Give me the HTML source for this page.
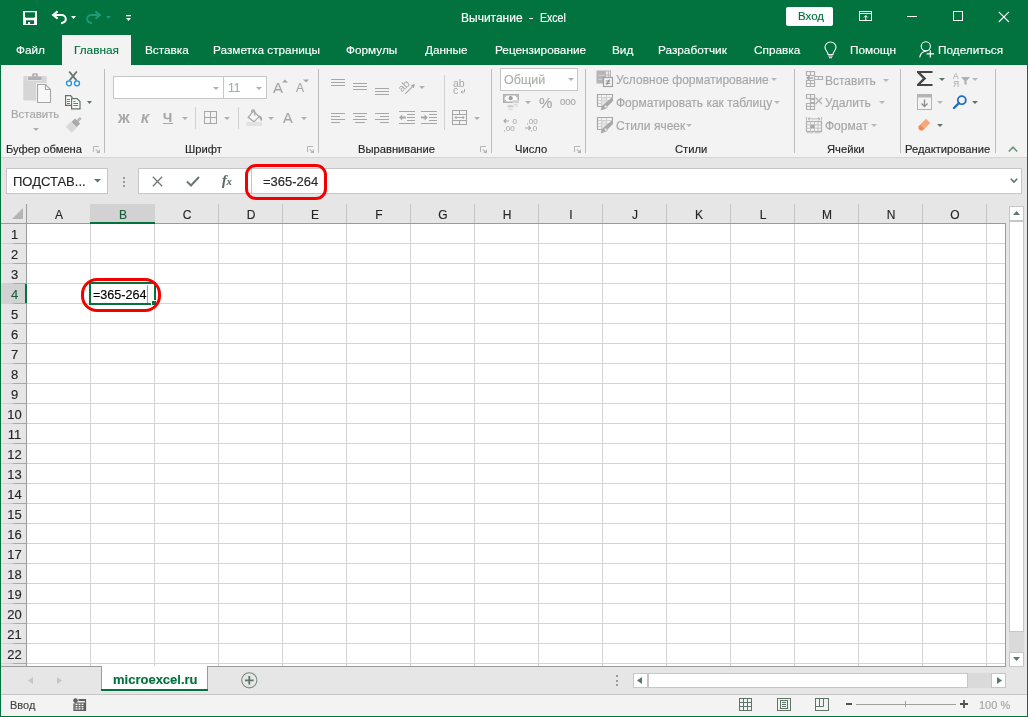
<!DOCTYPE html><html><head><meta charset="utf-8"><style>
*{margin:0;padding:0;box-sizing:border-box}
html,body{width:1028px;height:717px;overflow:hidden;background:#fff;font-family:"Liberation Sans",sans-serif}
.a{position:absolute}
.t{position:absolute;white-space:nowrap;line-height:1;will-change:transform;-webkit-text-stroke:0.15px currentColor}
svg{position:absolute;overflow:visible}
</style></head><body><div class="a" style="left:0px;top:0px;width:1028px;height:65px;background:#02723f"></div><svg style="left:23px;top:11px;" width="14" height="14" viewBox="0 0 14 14"><rect x="0" y="0" width="14" height="14" fill="#fff"/><path d="M2 1.2H12V6L11 6.8H3L2 6Z" fill="#02723f"/><path d="M3 9.2H11V13H7V11H5V13H3Z" fill="#02723f"/></svg><svg style="left:48px;top:8px;" width="22" height="18" viewBox="0 0 22 18"><path d="M5 7H13.5C16 7 17.8 8.8 17.8 11.1C17.8 13.3 16.3 14.8 13 15.2" fill="none" stroke="#fff" stroke-width="2"/><path d="M9.6 3.4L5.2 7L9.6 10.6" fill="none" stroke="#fff" stroke-width="2.1"/></svg><svg style="left:71px;top:16px;" width="5" height="3" viewBox="0 0 5 3"><path d="M0 0H5L2.5 3Z" fill="#fff"/></svg><svg style="left:84px;top:8px;" width="22" height="18" viewBox="0 0 22 18"><path d="M16 7H7.5C5 7 3.2 8.8 3.2 11.1C3.2 13.3 4.7 14.8 8 15.2" fill="none" stroke="#1e9a72" stroke-width="2"/><path d="M11.4 3.4L15.8 7L11.4 10.6" fill="none" stroke="#1e9a72" stroke-width="2.1"/></svg><svg style="left:106px;top:16px;" width="5" height="3" viewBox="0 0 5 3"><path d="M0 0H5L2.5 3Z" fill="#1e9a72"/></svg><svg style="left:126px;top:14px;" width="5" height="8" viewBox="0 0 5 8"><rect x="0" y="1" width="5" height="1.3" fill="#fff"/><path d="M0 4H5L2.5 7Z" fill="#fff"/></svg><div class="t" style="left:461px;top:11.84px;font-size:12px;color:#fff;font-weight:400;">Вычитание</div><div class="a" style="left:529px;top:18px;width:4px;height:1px;background:#fff"></div><div class="t" style="left:539.5px;top:11.84px;font-size:12px;color:#fff;font-weight:400;"><span style="display:inline-block;transform:scaleX(0.88);transform-origin:0 0">Excel</span></div><div class="a" style="left:786px;top:7px;width:47px;height:19px;background:#fff;border-radius:2px"></div><div class="t" style="left:797.5px;top:11.47px;font-size:11.5px;color:#02723f;font-weight:400;">Вход</div><svg style="left:859px;top:11px;" width="14" height="11" viewBox="0 0 14 11"><rect x="0.5" y="0.5" width="12" height="9" fill="none" stroke="#fff" stroke-width="1"/><path d="M0.5 2.5H12.5" stroke="#fff" stroke-width="1"/><path d="M6.8 9.5V4.6M5 6.4L6.8 4.6L8.6 6.4" fill="none" stroke="#fff" stroke-width="1"/></svg><div class="a" style="left:907px;top:16px;width:10px;height:1px;background:#fff"></div><svg style="left:953px;top:11px;" width="11" height="11" viewBox="0 0 11 11"><rect x="0.5" y="0.5" width="9" height="9" fill="none" stroke="#fff" stroke-width="1"/></svg><svg style="left:998px;top:11px;" width="12" height="12" viewBox="0 0 12 12"><path d="M0.8 0.8L11 11M11 0.8L0.8 11" stroke="#fff" stroke-width="1.1"/></svg><div class="a" style="left:62px;top:35px;width:69px;height:30px;background:#f3f3f3"></div><div class="t" style="left:16px;top:44.91px;font-size:11.8px;color:#fff;font-weight:400;">Файл</div><div class="t" style="left:74px;top:44.91px;font-size:11.8px;color:#02723f;font-weight:400;">Главная</div><div class="t" style="left:145px;top:44.91px;font-size:11.8px;color:#fff;font-weight:400;">Вставка</div><div class="t" style="left:213px;top:44.91px;font-size:11.8px;color:#fff;font-weight:400;">Разметка страницы</div><div class="t" style="left:346px;top:44.91px;font-size:11.8px;color:#fff;font-weight:400;">Формулы</div><div class="t" style="left:425px;top:44.91px;font-size:11.8px;color:#fff;font-weight:400;">Данные</div><div class="t" style="left:495px;top:44.91px;font-size:11.8px;color:#fff;font-weight:400;">Рецензирование</div><div class="t" style="left:612px;top:44.91px;font-size:11.8px;color:#fff;font-weight:400;">Вид</div><div class="t" style="left:658px;top:44.91px;font-size:11.8px;color:#fff;font-weight:400;">Разработчик</div><div class="t" style="left:754px;top:44.91px;font-size:11.8px;color:#fff;font-weight:400;">Справка</div><div class="t" style="left:850px;top:44.91px;font-size:11.8px;color:#fff;font-weight:400;">Помощн</div><div class="t" style="left:938px;top:44.91px;font-size:11.8px;color:#fff;font-weight:400;">Поделиться</div><svg style="left:824px;top:41px;" width="13" height="18" viewBox="0 0 13 18"><path d="M6.5 1C3.3 1 1 3.4 1 6.3C1 8.5 2.3 9.8 3.3 11.2C3.9 12 4 12.7 4 13.5H9C9 12.7 9.1 12 9.7 11.2C10.7 9.8 12 8.5 12 6.3C12 3.4 9.7 1 6.5 1Z" fill="none" stroke="#fff" stroke-width="1.1"/><path d="M4.2 15H8.8M5 16.8H8" stroke="#fff" stroke-width="1.1"/></svg><svg style="left:919px;top:41px;" width="16" height="17" viewBox="0 0 16 17"><circle cx="6.8" cy="5.3" r="4.6" fill="none" stroke="#fff" stroke-width="1.1"/><path d="M0.7 16.5C1.3 12.8 3.6 10.4 7.2 10.2" fill="none" stroke="#fff" stroke-width="1.1"/><path d="M11.3 9.2V16.6M7.6 12.9H15" stroke="#fff" stroke-width="1.2"/></svg><div class="a" style="left:1px;top:65px;width:1026px;height:92px;background:#f3f3f3"></div><div class="a" style="left:1px;top:157px;width:1026px;height:1px;background:#d5d5d5"></div><div class="a" style="left:104px;top:69px;width:1px;height:84px;background:#bdbdbd"></div><div class="a" style="left:318px;top:69px;width:1px;height:84px;background:#bdbdbd"></div><div class="a" style="left:491px;top:69px;width:1px;height:84px;background:#bdbdbd"></div><div class="a" style="left:585px;top:69px;width:1px;height:84px;background:#bdbdbd"></div><div class="a" style="left:794px;top:69px;width:1px;height:84px;background:#bdbdbd"></div><div class="a" style="left:900px;top:69px;width:1px;height:84px;background:#bdbdbd"></div><div class="a" style="left:995px;top:69px;width:1px;height:84px;background:#bdbdbd"></div><div class="t" style="left:6px;top:143.52px;font-size:11.2px;color:#262626;font-weight:400;">Буфер обмена</div><div class="t" style="left:185px;top:143.52px;font-size:11.2px;color:#262626;font-weight:400;">Шрифт</div><div class="t" style="left:358px;top:143.52px;font-size:11.2px;color:#262626;font-weight:400;">Выравнивание</div><div class="t" style="left:515px;top:143.52px;font-size:11.2px;color:#262626;font-weight:400;">Число</div><div class="t" style="left:675px;top:143.52px;font-size:11.2px;color:#262626;font-weight:400;">Стили</div><div class="t" style="left:827px;top:143.52px;font-size:11.2px;color:#262626;font-weight:400;">Ячейки</div><div class="t" style="left:905px;top:143.52px;font-size:11.2px;color:#262626;font-weight:400;">Редактирование</div><svg style="left:93px;top:146px;" width="8" height="8" viewBox="0 0 8 8"><path d="M0.5 6V0.5H6" fill="none" stroke="#b5b5b5" stroke-width="1"/><path d="M2.8 3.4L5.5 6.1" stroke="#b5b5b5" stroke-width="1.1"/><path d="M3.2 7H7V3.2Z" fill="#b5b5b5"/></svg><svg style="left:307px;top:146px;" width="8" height="8" viewBox="0 0 8 8"><path d="M0.5 6V0.5H6" fill="none" stroke="#b5b5b5" stroke-width="1"/><path d="M2.8 3.4L5.5 6.1" stroke="#b5b5b5" stroke-width="1.1"/><path d="M3.2 7H7V3.2Z" fill="#b5b5b5"/></svg><svg style="left:480px;top:146px;" width="8" height="8" viewBox="0 0 8 8"><path d="M0.5 6V0.5H6" fill="none" stroke="#b5b5b5" stroke-width="1"/><path d="M2.8 3.4L5.5 6.1" stroke="#b5b5b5" stroke-width="1.1"/><path d="M3.2 7H7V3.2Z" fill="#b5b5b5"/></svg><svg style="left:574px;top:146px;" width="8" height="8" viewBox="0 0 8 8"><path d="M0.5 6V0.5H6" fill="none" stroke="#b5b5b5" stroke-width="1"/><path d="M2.8 3.4L5.5 6.1" stroke="#b5b5b5" stroke-width="1.1"/><path d="M3.2 7H7V3.2Z" fill="#b5b5b5"/></svg><svg style="left:1008px;top:146px;" width="10" height="6" viewBox="0 0 10 6"><path d="M0.8 5.5L5 1.2L9.2 5.5" fill="none" stroke="#6f8f7a" stroke-width="1.6"/></svg><svg style="left:23px;top:73px;" width="29" height="31" viewBox="0 0 29 31"><rect x="0.3" y="3" width="23.4" height="24.6" rx="1" fill="#d6d6d6"/><rect x="4.5" y="2.5" width="14.5" height="5" fill="#f3f3f3"/><rect x="5" y="3.4" width="13.7" height="3.6" fill="#b0b0b0"/><rect x="9.2" y="0.3" width="5.6" height="3.5" rx="1.2" fill="#b0b0b0"/><circle cx="12" cy="2.3" r="0.9" fill="#f3f3f3"/><path d="M13 10H23L29 16V31H13Z" fill="#f3f3f3"/><path d="M14.5 11.5H22.5L27.5 16.5V29.5H14.5Z" fill="#f8f8f8" stroke="#a6a6a6" stroke-width="1.1"/><path d="M22.5 11.5V16.5H27.5" fill="none" stroke="#a6a6a6" stroke-width="1.1"/></svg><div class="t" style="left:11px;top:108.85px;font-size:11.4px;color:#a6a6a6;font-weight:400;">Вставить</div><svg style="left:33.0px;top:127.5px;" width="6" height="4.0" viewBox="0 0 6 4.0"><path d="M0 0H6L3.0 3.0Z" fill="#b0b0b0"/></svg><svg style="left:65px;top:70px;" width="16" height="18" viewBox="0 0 16 18"><path d="M4.5 10.5L11.8 1.5M11.5 10.5L4.2 1.5" stroke="#66756b" stroke-width="1.9"/><circle cx="4" cy="13.3" r="2.5" fill="#f3f3f3" stroke="#1e8fe0" stroke-width="1.3"/><circle cx="12" cy="13.3" r="2.5" fill="#f3f3f3" stroke="#1e8fe0" stroke-width="1.3"/></svg><svg style="left:65px;top:95px;" width="16" height="15" viewBox="0 0 16 15"><path d="M0.6 0.6H5.5L7 2.1V10.3H0.6Z" fill="#fff" stroke="#5f7266" stroke-width="1.2"/><path d="M6.6 3.6H12L15 6.6V13.8H6.6Z" fill="#fff" stroke="#5f7266" stroke-width="1.2"/><path d="M2 4.5H5M2 6.5H5M2 8.5H5M8.3 6.5H10.5M8.3 8.5H13M8.3 10.5H13" stroke="#1e8fe0" stroke-width="1"/></svg><svg style="left:87px;top:101px;" width="5" height="3" viewBox="0 0 5 3"><path d="M0 0H5L2.5 3Z" fill="#5f7266"/></svg><svg style="left:65px;top:117px;" width="17" height="16" viewBox="0 0 17 16"><g transform="translate(8.3 8.3) rotate(45)"><rect x="-1.4" y="-10.5" width="2.8" height="4.5" fill="#b8b8b8"/><rect x="-3.6" y="-6" width="7.2" height="5" fill="#a9a9a9"/><rect x="-4.2" y="-1" width="8.4" height="7.5" fill="#d9d9d9"/></g></svg><div class="a" style="left:113px;top:76px;width:111px;height:23px;background:#fff;border:1px solid #c6c6c6"></div><div class="a" style="left:223px;top:76px;width:44px;height:23px;background:#fff;border:1px solid #c6c6c6"></div><svg style="left:213.0px;top:86.5px;" width="6" height="4.0" viewBox="0 0 6 4.0"><path d="M0 0H6L3.0 3.0Z" fill="#b0b0b0"/></svg><svg style="left:256.0px;top:86.5px;" width="6" height="4.0" viewBox="0 0 6 4.0"><path d="M0 0H6L3.0 3.0Z" fill="#b0b0b0"/></svg><div class="t" style="left:227.5px;top:82.34px;font-size:12px;color:#9fb0a6;font-weight:400;">11</div><div class="t" style="left:273px;top:79.80px;font-size:15px;color:#a6a6a6;font-weight:400;">A</div><svg style="left:282px;top:79px;" width="6" height="4" viewBox="0 0 6 4"><path d="M0 3.5L3 0.5L6 3.5Z" fill="#a6a6a6"/></svg><div class="t" style="left:296px;top:82.34px;font-size:12px;color:#a6a6a6;font-weight:400;">A</div><svg style="left:303px;top:79px;" width="6" height="4" viewBox="0 0 6 4"><path d="M0 0.5H6L3 3.5Z" fill="#a6a6a6"/></svg><div class="t" style="left:118px;top:112.00px;font-size:13px;color:#a6a6a6;font-weight:700;">Ж</div><div class="t" style="left:141px;top:112.00px;font-size:13px;color:#a6a6a6;font-weight:700;font-style:italic">К</div><div class="t" style="left:163px;top:111.00px;font-size:13px;color:#a6a6a6;font-weight:700;">Ч</div><div class="a" style="left:163px;top:123px;width:10px;height:1.3px;background:#a6a6a6"></div><svg style="left:181.5px;top:116.5px;" width="6" height="4.0" viewBox="0 0 6 4.0"><path d="M0 0H6L3.0 3.0Z" fill="#b0b0b0"/></svg><div class="a" style="left:195px;top:107px;width:1px;height:22px;background:#d0d0d0"></div><svg style="left:204px;top:111px;" width="13" height="13" viewBox="0 0 13 13"><rect x="0.5" y="0.5" width="12" height="12" fill="none" stroke="#a6a6a6" stroke-width="1"/><path d="M6.5 0.5V12.5M0.5 6.5H12.5" stroke="#a6a6a6" stroke-width="1"/></svg><svg style="left:224.0px;top:116.5px;" width="6" height="4.0" viewBox="0 0 6 4.0"><path d="M0 0H6L3.0 3.0Z" fill="#b0b0b0"/></svg><div class="a" style="left:238px;top:107px;width:1px;height:22px;background:#d0d0d0"></div><svg style="left:246px;top:105px;" width="17" height="21" viewBox="0 0 17 21"><path d="M2.2 12.3L7.2 6.2L13.2 11.6L8 16.8Z" fill="#f6f6f6" stroke="#a6a6a6" stroke-width="1.2"/><path d="M5.6 7.6V6C5.6 5.3 6.1 4.9 6.8 4.9H7.6C8.3 4.9 8.7 5.3 8.7 6V10.8" fill="none" stroke="#a6a6a6" stroke-width="1.1"/><path d="M12.4 10.4C14.6 10.6 16.2 12 16.2 13.8C16.2 14.9 15.7 15.6 15 16.2L13.4 12.4Z" fill="#a6a6a6"/><rect x="0" y="17" width="16" height="4" fill="#e2e2e2"/></svg><svg style="left:267.5px;top:116.5px;" width="6" height="4.0" viewBox="0 0 6 4.0"><path d="M0 0H6L3.0 3.0Z" fill="#b0b0b0"/></svg><div class="t" style="left:283px;top:110.53px;font-size:14.5px;color:#a6a6a6;font-weight:400;">A</div><svg style="left:301.0px;top:116.5px;" width="6" height="4.0" viewBox="0 0 6 4.0"><path d="M0 0H6L3.0 3.0Z" fill="#b0b0b0"/></svg><svg style="left:331px;top:79px;" width="20" height="20" viewBox="0 0 20 20"><rect x="0" y="0" width="14" height="1" fill="#a6a6a6"/><rect x="0" y="3" width="14" height="1" fill="#a6a6a6"/><rect x="0" y="6" width="14" height="1" fill="#a6a6a6"/></svg><svg style="left:353px;top:83px;" width="20" height="20" viewBox="0 0 20 20"><rect x="0" y="0" width="14" height="1" fill="#a6a6a6"/><rect x="0" y="3" width="14" height="1" fill="#a6a6a6"/><rect x="0" y="6" width="14" height="1" fill="#a6a6a6"/></svg><svg style="left:375px;top:88px;" width="20" height="20" viewBox="0 0 20 20"><rect x="0" y="0" width="14" height="1" fill="#a6a6a6"/><rect x="0" y="3" width="14" height="1" fill="#a6a6a6"/><rect x="0" y="6" width="14" height="1" fill="#a6a6a6"/></svg><svg style="left:398px;top:79px;" width="20" height="16" viewBox="0 0 20 16"><text x="0" y="0" font-size="10.5" font-family="Liberation Sans" fill="#a6a6a6" transform="translate(4 13.6) rotate(-45)">ab</text><path d="M7.2 14.8L16.2 5.8" fill="none" stroke="#a6a6a6" stroke-width="1.1"/><path d="M17 5L12.8 6.2L15.8 9.2Z" fill="#a6a6a6"/></svg><svg style="left:418.5px;top:86.0px;" width="6" height="4.0" viewBox="0 0 6 4.0"><path d="M0 0H6L3.0 3.0Z" fill="#b0b0b0"/></svg><div class="a" style="left:444px;top:75px;width:1px;height:55px;background:#d0d0d0"></div><svg style="left:453px;top:79px;" width="14" height="16" viewBox="0 0 14 16"><text x="0" y="7.6" font-size="10.5" font-family="Liberation Sans" fill="#a6a6a6">ab</text><text x="0" y="14.5" font-size="10.5" font-family="Liberation Sans" fill="#a6a6a6">c</text><path d="M11.5 10V13H8.2M9.5 11.7L8.2 13L9.5 14.3" fill="none" stroke="#a6a6a6" stroke-width="0.9"/></svg><svg style="left:331px;top:113px;" width="20" height="20" viewBox="0 0 20 20"><rect x="0" y="0" width="14" height="1" fill="#a6a6a6"/><rect x="0" y="3" width="9" height="1" fill="#a6a6a6"/><rect x="0" y="6" width="14" height="1" fill="#a6a6a6"/><rect x="0" y="9" width="9" height="1" fill="#a6a6a6"/></svg><svg style="left:353px;top:113px;" width="20" height="20" viewBox="0 0 20 20"><rect x="0" y="0" width="14" height="1" fill="#a6a6a6"/><rect x="2" y="3" width="10" height="1" fill="#a6a6a6"/><rect x="0" y="6" width="14" height="1" fill="#a6a6a6"/><rect x="2" y="9" width="10" height="1" fill="#a6a6a6"/></svg><svg style="left:375px;top:113px;" width="20" height="20" viewBox="0 0 20 20"><rect x="0" y="0" width="14" height="1" fill="#a6a6a6"/><rect x="5" y="3" width="9" height="1" fill="#a6a6a6"/><rect x="0" y="6" width="14" height="1" fill="#a6a6a6"/><rect x="5" y="9" width="9" height="1" fill="#a6a6a6"/></svg><svg style="left:399px;top:111px;" width="16" height="13" viewBox="0 0 16 13"><rect x="0" y="0" width="16" height="1" fill="#a6a6a6"/><rect x="8" y="3" width="8" height="1" fill="#a6a6a6"/><rect x="8" y="6" width="8" height="1" fill="#a6a6a6"/><rect x="8" y="9" width="8" height="1" fill="#a6a6a6"/><rect x="0" y="12" width="16" height="1" fill="#a6a6a6"/><path d="M0 6.5L3.2 3.4V5.6H6.8V7.4H3.2V9.6Z" fill="#a6a6a6"/></svg><svg style="left:421px;top:111px;" width="16" height="13" viewBox="0 0 16 13"><rect x="0" y="0" width="16" height="1" fill="#a6a6a6"/><rect x="8" y="3" width="8" height="1" fill="#a6a6a6"/><rect x="8" y="6" width="8" height="1" fill="#a6a6a6"/><rect x="8" y="9" width="8" height="1" fill="#a6a6a6"/><rect x="0" y="12" width="16" height="1" fill="#a6a6a6"/><path d="M6.8 6.5L3.6 3.4V5.6H0V7.4H3.6V9.6Z" fill="#a6a6a6"/></svg><svg style="left:452px;top:110px;" width="16" height="15" viewBox="0 0 16 15"><rect x="0.5" y="0.5" width="14" height="14" fill="none" stroke="#a6a6a6" stroke-width="1"/><path d="M0.5 4.5H14.5M0.5 10.5H14.5M7.5 0.5V4.5M7.5 10.5V14.5M3 7.5H12M4.5 6L3 7.5L4.5 9M10.5 6L12 7.5L10.5 9" fill="none" stroke="#a6a6a6" stroke-width="1"/></svg><svg style="left:473.5px;top:116.5px;" width="6" height="4.0" viewBox="0 0 6 4.0"><path d="M0 0H6L3.0 3.0Z" fill="#b0b0b0"/></svg><div class="a" style="left:500px;top:68px;width:78px;height:23px;background:#fff;border:1px solid #c6c6c6"></div><div class="t" style="left:504px;top:73.92px;font-size:12.5px;color:#a8b0a8;font-weight:400;">Общий</div><svg style="left:567.5px;top:78.0px;" width="6" height="4.0" viewBox="0 0 6 4.0"><path d="M0 0H6L3.0 3.0Z" fill="#b0b0b0"/></svg><svg style="left:503px;top:94px;" width="17" height="17" viewBox="0 0 17 17"><path d="M0.75 0.75H15.25V8.25H0.75Z" stroke="#b0b0b0" stroke-width="1.5" fill="#fbfbfb"/><path d="M1.5 1.5H4L1.5 4ZM14.5 1.5V4L12 1.5ZM1.5 7.5V5L4 7.5Z" fill="#b0b0b0"/><circle cx="7.7" cy="4.2" r="2.1" fill="#a0a0a0"/><ellipse cx="12.5" cy="7.4" rx="3.6" ry="1.3" fill="#f3f3f3"/><ellipse cx="12.5" cy="7.4" rx="3.3" ry="1.1" fill="#cfcfcf"/><rect x="10.5" y="9.8" width="4.5" height="1" fill="#d6d6d6"/><rect x="12" y="11.6" width="3" height="1" fill="#d6d6d6"/><ellipse cx="7.5" cy="12.3" rx="3.3" ry="1.2" fill="#cfcfcf"/><rect x="5" y="14.8" width="5" height="1" fill="#d6d6d6"/></svg><svg style="left:524.5px;top:100.5px;" width="6" height="4.0" viewBox="0 0 6 4.0"><path d="M0 0H6L3.0 3.0Z" fill="#b0b0b0"/></svg><div class="t" style="left:539px;top:95.30px;font-size:15px;color:#a6a6a6;font-weight:400;">%</div><div class="t" style="left:560px;top:96.96px;font-size:9.5px;color:#a6a6a6;font-weight:400;">000</div><svg style="left:503px;top:118px;" width="16" height="15" viewBox="0 0 16 15"><path d="M0.8 3H6M3 1L1 3L3 5" fill="none" stroke="#a6a6a6" stroke-width="1.1"/><text x="9.5" y="5.6" font-size="8" font-family="Liberation Sans" fill="#a0a0a0">0</text><text x="0.5" y="13" font-size="8" font-family="Liberation Sans" fill="#a0a0a0">,00</text></svg><svg style="left:525px;top:118px;" width="16" height="15" viewBox="0 0 16 15"><text x="1.5" y="5.6" font-size="8" font-family="Liberation Sans" fill="#a0a0a0">,00</text><path d="M0 10H5.5M3.5 8L5.5 10L3.5 12" fill="none" stroke="#a6a6a6" stroke-width="1.1"/><text x="5.5" y="13" font-size="8" font-family="Liberation Sans" fill="#a0a0a0">,0</text></svg><svg style="left:597px;top:71px;" width="17" height="17" viewBox="0 0 17 17"><rect x="0" y="0" width="13.5" height="12" fill="#f3f3f3" stroke="#b3b3b3" stroke-width="1"/><rect x="0" y="0" width="9" height="12" fill="#b5b5b5"/><path d="M1 4.5H8M1 8.5H5" stroke="#cfcfcf"/><path d="M9 4H13.5M11.3 0V6" stroke="#b3b3b3"/><rect x="6.5" y="6.5" width="9" height="9" fill="#f3f3f3" stroke="#a0a0a0" stroke-width="1.2"/><path d="M8.8 10H13.2M8.8 12.3H13.2M12.3 8.5L9.7 13.8" stroke="#7a7a7a" stroke-width="0.9"/></svg><svg style="left:597px;top:94px;" width="17" height="17" viewBox="0 0 17 17"><path d="M0.5 12.5V0.5H15.5V3M0.5 12.5H5" fill="none" stroke="#a6a6a6" stroke-width="1.2"/><path d="M1 3.5H15M1 6.5H12M1 9.5H8M4.5 1V12M9.5 1V9" stroke="#d0d0d0" stroke-width="1"/><rect x="5" y="4" width="4" height="8" fill="#e2e2e2"/><path d="M16 2.5V7L8 15L3.5 16.5L5 12Z" fill="#a8a8a8"/><circle cx="8.8" cy="12.6" r="1.5" fill="#f3f3f3" stroke="#a8a8a8" stroke-width="0.8"/></svg><svg style="left:597px;top:117px;" width="17" height="17" viewBox="0 0 17 17"><path d="M0.5 12.5V0.5H15.5V3M0.5 12.5H5" fill="none" stroke="#a6a6a6" stroke-width="1.2"/><path d="M1 3.5H15M1 6.5H12M1 9.5H8M4.5 1V12M9.5 1V9" stroke="#d0d0d0" stroke-width="1"/><rect x="5" y="4" width="4" height="8" fill="#e2e2e2"/><path d="M16 2.5V7L8 15L3.5 16.5L5 12Z" fill="#a8a8a8"/><circle cx="8.8" cy="12.6" r="1.5" fill="#f3f3f3" stroke="#a8a8a8" stroke-width="0.8"/></svg><div class="t" style="left:616px;top:74.34px;font-size:12px;color:#a6a6a6;font-weight:400;">Условное форматирование</div><svg style="left:770.5px;top:78.0px;" width="6" height="4.0" viewBox="0 0 6 4.0"><path d="M0 0H6L3.0 3.0Z" fill="#b8b8b8"/></svg><div class="t" style="left:616px;top:97.34px;font-size:12px;color:#a6a6a6;font-weight:400;">Форматировать как таблицу</div><svg style="left:774.0px;top:101.0px;" width="6" height="4.0" viewBox="0 0 6 4.0"><path d="M0 0H6L3.0 3.0Z" fill="#b8b8b8"/></svg><div class="t" style="left:616px;top:120.34px;font-size:12px;color:#a6a6a6;font-weight:400;">Стили ячеек</div><svg style="left:686.0px;top:124.0px;" width="6" height="4.0" viewBox="0 0 6 4.0"><path d="M0 0H6L3.0 3.0Z" fill="#b8b8b8"/></svg><svg style="left:806px;top:71px;" width="17" height="17" viewBox="0 0 17 17"><path d="M0.5 0.5H8.5V4.5H0.5ZM4.5 0.5V4.5M0.5 9.5H8.5V15.5H0.5ZM4.5 9.5V15.5M0.5 12.5H8.5M8.5 5.5H16.5V8.5H8.5ZM12.5 5.5V8.5" fill="none" stroke="#b0b0b0" stroke-width="1.2"/><path d="M1.2 7H7M3.6 4.6L1.2 7L3.6 9.4" fill="none" stroke="#a6a6a6" stroke-width="1.4"/></svg><div class="t" style="left:825px;top:74.84px;font-size:12px;color:#a6a6a6;font-weight:400;">Вставить</div><svg style="left:882.5px;top:78.5px;" width="6" height="4.0" viewBox="0 0 6 4.0"><path d="M0 0H6L3.0 3.0Z" fill="#b8b8b8"/></svg><svg style="left:806px;top:94px;" width="17" height="17" viewBox="0 0 17 17"><path d="M0.5 0.5H8.5V4.5H0.5ZM4.5 0.5V4.5M0.5 9.5H8.5V15.5H0.5ZM4.5 9.5V15.5M0.5 12.5H8.5M4.5 4.5V9.5M4.5 5.5H8.5V8.5H4.5" fill="none" stroke="#b0b0b0" stroke-width="1.2"/><path d="M9.5 3.5L16 10M16 3.5L9.5 10" stroke="#b0b0b0" stroke-width="1.2"/></svg><div class="t" style="left:825px;top:97.34px;font-size:12px;color:#a6a6a6;font-weight:400;">Удалить</div><svg style="left:878.5px;top:101.0px;" width="6" height="4.0" viewBox="0 0 6 4.0"><path d="M0 0H6L3.0 3.0Z" fill="#b8b8b8"/></svg><svg style="left:806px;top:117px;" width="17" height="17" viewBox="0 0 17 17"><path d="M0.5 0V3.5M15.5 0V3.5M2 1.8H14M4 0.3L2 1.8L4 3.3M12 0.3L14 1.8L12 3.3" fill="none" stroke="#b0b0b0" stroke-width="0.9"/><rect x="0.5" y="4.5" width="15" height="10" fill="none" stroke="#b0b0b0" stroke-width="1.2"/><path d="M4.5 4.5V14.5M8.5 4.5V14.5M12 4.5V14.5M0.5 7.8H15.5M0.5 11.2H15.5" stroke="#c2c2c2" stroke-width="1"/><rect x="4.5" y="7.8" width="4" height="3.4" fill="#a6a6a6"/><path d="M1 15.8H7.5M8.5 15.8H14.5" stroke="#c2c2c2" stroke-width="1"/></svg><div class="t" style="left:825px;top:120.34px;font-size:12px;color:#a6a6a6;font-weight:400;">Формат</div><svg style="left:870.5px;top:124.0px;" width="6" height="4.0" viewBox="0 0 6 4.0"><path d="M0 0H6L3.0 3.0Z" fill="#b8b8b8"/></svg><svg style="left:917px;top:71px;" width="16" height="16" viewBox="0 0 16 16"><path d="M0 0H15.5V2H3.6L9.3 7.5L3.6 13H15.5V15H0V13.2L5.8 7.5L0 1.8Z" fill="#444"/></svg><svg style="left:938.5px;top:78.0px;" width="6" height="4.0" viewBox="0 0 6 4.0"><path d="M0 0H6L3.0 3.0Z" fill="#5f7566"/></svg><svg style="left:953px;top:71px;" width="18" height="17" viewBox="0 0 18 17"><text x="0" y="7.5" font-size="8.5" font-family="Liberation Sans" fill="#a6a6a6">А</text><text x="0" y="16" font-size="8.5" font-family="Liberation Sans" fill="#a6a6a6">Я</text><path d="M8 6H17L13.5 10V14L11.5 13V10Z" fill="#b0b0b0"/></svg><svg style="left:971.5px;top:78.0px;" width="6" height="4.0" viewBox="0 0 6 4.0"><path d="M0 0H6L3.0 3.0Z" fill="#b8b8b8"/></svg><svg style="left:917px;top:94px;" width="15" height="16" viewBox="0 0 15 16"><rect x="0.5" y="0.5" width="14" height="15" fill="none" stroke="#b3b3b3"/><rect x="0.5" y="0.5" width="14" height="3" fill="#b3b3b3"/><path d="M7.5 5.5V12.5M4.5 9.5L7.5 12.5L10.5 9.5" fill="none" stroke="#8c8c8c" stroke-width="1.3"/></svg><svg style="left:936.5px;top:100.5px;" width="6" height="4.0" viewBox="0 0 6 4.0"><path d="M0 0H6L3.0 3.0Z" fill="#b8b8b8"/></svg><svg style="left:953px;top:95px;" width="14" height="14" viewBox="0 0 14 14"><circle cx="8.8" cy="5.2" r="4" fill="none" stroke="#1e6fc0" stroke-width="1.8"/><path d="M6 8L1 13" stroke="#1e6fc0" stroke-width="2.4" stroke-linecap="round"/></svg><svg style="left:971.5px;top:100.5px;" width="6" height="4.0" viewBox="0 0 6 4.0"><path d="M0 0H6L3.0 3.0Z" fill="#5f7566"/></svg><svg style="left:918px;top:118px;" width="13" height="13" viewBox="0 0 13 13"><path d="M8 0.8L12.2 5L6.5 10.7L2.3 6.5Z" fill="#f4a77a"/><path d="M2.3 6.5L6.5 10.7L4.7 12.5H2.2L0.5 10.8V8.3Z" fill="#f08a55"/></svg><svg style="left:936.5px;top:124.0px;" width="6" height="4.0" viewBox="0 0 6 4.0"><path d="M0 0H6L3.0 3.0Z" fill="#5f7566"/></svg><div class="a" style="left:1px;top:158px;width:1026px;height:508px;background:#e6e6e6"></div><div class="a" style="left:6px;top:168px;width:102px;height:26px;background:#fff;border:1px solid #c6c6c6"></div><div class="t" style="left:13px;top:175.00px;font-size:13px;color:#262626;font-weight:400;">ПОДСТАВ...</div><svg style="left:94.0px;top:178.75px;" width="7" height="4.5" viewBox="0 0 7 4.5"><path d="M0 0H7L3.5 3.5Z" fill="#5f7566"/></svg><div class="a" style="left:122.5px;top:177px;width:2px;height:2px;background:#9a9a9a"></div><div class="a" style="left:122.5px;top:181px;width:2px;height:2px;background:#9a9a9a"></div><div class="a" style="left:122.5px;top:185px;width:2px;height:2px;background:#9a9a9a"></div><div class="a" style="left:138px;top:168px;width:114px;height:26px;background:#fff;border:1px solid #c6c6c6;border-right:none"></div><div class="a" style="left:251px;top:168px;width:771px;height:26px;background:#fff;border:1px solid #c6c6c6"></div><svg style="left:152px;top:176px;" width="11" height="11" viewBox="0 0 11 11"><path d="M0.8 0.8L10.2 10.2M10.2 0.8L0.8 10.2" stroke="#6b7b72" stroke-width="1.3"/></svg><svg style="left:186px;top:176px;" width="14" height="11" viewBox="0 0 14 11"><path d="M1 5.5L5 9.5L13 1" fill="none" stroke="#6b7b72" stroke-width="2.1"/></svg><div class="t" style="left:222px;top:174.15px;font-size:14px;color:#5a6a60;font-weight:700;font-family:Liberation Serif"><i>f</i><i style="font-size:10px">x</i></div><div class="t" style="left:263px;top:175.00px;font-size:13px;color:#262626;font-weight:400;">=365-264</div><svg style="left:1010px;top:178px;" width="8" height="5" viewBox="0 0 8 5"><path d="M0.8 0.8L4 4L7.2 0.8" fill="none" stroke="#5f7566" stroke-width="1.6"/></svg><div class="a" style="left:1px;top:204px;width:1004px;height:20px;background:#e6e6e6"></div><div class="a" style="left:1px;top:204px;width:26px;height:462px;background:#e6e6e6"></div><div class="a" style="left:27px;top:224px;width:978px;height:442px;background:#fff"></div><div class="a" style="left:1px;top:284px;width:25px;height:19px;background:#d2d2d2"></div><svg style="left:12px;top:208px;" width="12" height="12" viewBox="0 0 12 12"><path d="M11 0V11H0Z" fill="#b4b4b4"/></svg><div class="a" style="left:1px;top:223px;width:1004px;height:1px;background:#9b9b9b"></div><div class="a" style="left:26px;top:204px;width:1px;height:462px;background:#9b9b9b"></div><div class="a" style="left:90px;top:204px;width:1px;height:19px;background:#c6c6c6"></div><div class="a" style="left:90px;top:224px;width:1px;height:442px;background:#d4d4d4"></div><div class="a" style="left:154px;top:204px;width:1px;height:19px;background:#c6c6c6"></div><div class="a" style="left:154px;top:224px;width:1px;height:442px;background:#d4d4d4"></div><div class="a" style="left:218px;top:204px;width:1px;height:19px;background:#c6c6c6"></div><div class="a" style="left:218px;top:224px;width:1px;height:442px;background:#d4d4d4"></div><div class="a" style="left:282px;top:204px;width:1px;height:19px;background:#c6c6c6"></div><div class="a" style="left:282px;top:224px;width:1px;height:442px;background:#d4d4d4"></div><div class="a" style="left:346px;top:204px;width:1px;height:19px;background:#c6c6c6"></div><div class="a" style="left:346px;top:224px;width:1px;height:442px;background:#d4d4d4"></div><div class="a" style="left:410px;top:204px;width:1px;height:19px;background:#c6c6c6"></div><div class="a" style="left:410px;top:224px;width:1px;height:442px;background:#d4d4d4"></div><div class="a" style="left:474px;top:204px;width:1px;height:19px;background:#c6c6c6"></div><div class="a" style="left:474px;top:224px;width:1px;height:442px;background:#d4d4d4"></div><div class="a" style="left:538px;top:204px;width:1px;height:19px;background:#c6c6c6"></div><div class="a" style="left:538px;top:224px;width:1px;height:442px;background:#d4d4d4"></div><div class="a" style="left:602px;top:204px;width:1px;height:19px;background:#c6c6c6"></div><div class="a" style="left:602px;top:224px;width:1px;height:442px;background:#d4d4d4"></div><div class="a" style="left:666px;top:204px;width:1px;height:19px;background:#c6c6c6"></div><div class="a" style="left:666px;top:224px;width:1px;height:442px;background:#d4d4d4"></div><div class="a" style="left:730px;top:204px;width:1px;height:19px;background:#c6c6c6"></div><div class="a" style="left:730px;top:224px;width:1px;height:442px;background:#d4d4d4"></div><div class="a" style="left:794px;top:204px;width:1px;height:19px;background:#c6c6c6"></div><div class="a" style="left:794px;top:224px;width:1px;height:442px;background:#d4d4d4"></div><div class="a" style="left:858px;top:204px;width:1px;height:19px;background:#c6c6c6"></div><div class="a" style="left:858px;top:224px;width:1px;height:442px;background:#d4d4d4"></div><div class="a" style="left:922px;top:204px;width:1px;height:19px;background:#c6c6c6"></div><div class="a" style="left:922px;top:224px;width:1px;height:442px;background:#d4d4d4"></div><div class="a" style="left:986px;top:204px;width:1px;height:19px;background:#c6c6c6"></div><div class="a" style="left:986px;top:224px;width:1px;height:442px;background:#d4d4d4"></div><div class="a" style="left:90px;top:204px;width:65px;height:19px;background:#d2d2d2"></div><div class="a" style="left:90px;top:222px;width:65px;height:2px;background:#02723f"></div><div class="t" style="left:39px;width:40px;text-align:center;top:208.84px;font-size:12px;color:#262626">A</div><div class="t" style="left:103px;width:40px;text-align:center;top:208.84px;font-size:12px;color:#1b5e3b">B</div><div class="t" style="left:167px;width:40px;text-align:center;top:208.84px;font-size:12px;color:#262626">C</div><div class="t" style="left:231px;width:40px;text-align:center;top:208.84px;font-size:12px;color:#262626">D</div><div class="t" style="left:295px;width:40px;text-align:center;top:208.84px;font-size:12px;color:#262626">E</div><div class="t" style="left:359px;width:40px;text-align:center;top:208.84px;font-size:12px;color:#262626">F</div><div class="t" style="left:423px;width:40px;text-align:center;top:208.84px;font-size:12px;color:#262626">G</div><div class="t" style="left:487px;width:40px;text-align:center;top:208.84px;font-size:12px;color:#262626">H</div><div class="t" style="left:551px;width:40px;text-align:center;top:208.84px;font-size:12px;color:#262626">I</div><div class="t" style="left:615px;width:40px;text-align:center;top:208.84px;font-size:12px;color:#262626">J</div><div class="t" style="left:679px;width:40px;text-align:center;top:208.84px;font-size:12px;color:#262626">K</div><div class="t" style="left:743px;width:40px;text-align:center;top:208.84px;font-size:12px;color:#262626">L</div><div class="t" style="left:807px;width:40px;text-align:center;top:208.84px;font-size:12px;color:#262626">M</div><div class="t" style="left:871px;width:40px;text-align:center;top:208.84px;font-size:12px;color:#262626">N</div><div class="t" style="left:935px;width:40px;text-align:center;top:208.84px;font-size:12px;color:#262626">O</div><div class="a" style="left:27px;top:243px;width:978px;height:1px;background:#d4d4d4"></div><div class="a" style="left:1px;top:243px;width:25px;height:1px;background:linear-gradient(to right,#d4d4d4 0,#d0d0d0 40%,#a9a9a9 55%,#a9a9a9 100%)"></div><div class="t" style="left:2px;width:25px;text-align:center;top:228.00px;font-size:13px;color:#262626">1</div><div class="a" style="left:27px;top:263px;width:978px;height:1px;background:#d4d4d4"></div><div class="a" style="left:1px;top:263px;width:25px;height:1px;background:linear-gradient(to right,#d4d4d4 0,#d0d0d0 40%,#a9a9a9 55%,#a9a9a9 100%)"></div><div class="t" style="left:2px;width:25px;text-align:center;top:248.00px;font-size:13px;color:#262626">2</div><div class="a" style="left:27px;top:283px;width:978px;height:1px;background:#d4d4d4"></div><div class="a" style="left:1px;top:283px;width:25px;height:1px;background:linear-gradient(to right,#d4d4d4 0,#d0d0d0 40%,#a9a9a9 55%,#a9a9a9 100%)"></div><div class="t" style="left:2px;width:25px;text-align:center;top:268.00px;font-size:13px;color:#262626">3</div><div class="a" style="left:27px;top:303px;width:978px;height:1px;background:#d4d4d4"></div><div class="a" style="left:1px;top:303px;width:25px;height:1px;background:linear-gradient(to right,#d4d4d4 0,#d0d0d0 40%,#a9a9a9 55%,#a9a9a9 100%)"></div><div class="t" style="left:2px;width:25px;text-align:center;top:288.00px;font-size:13px;color:#1b5e3b">4</div><div class="a" style="left:27px;top:323px;width:978px;height:1px;background:#d4d4d4"></div><div class="a" style="left:1px;top:323px;width:25px;height:1px;background:linear-gradient(to right,#d4d4d4 0,#d0d0d0 40%,#a9a9a9 55%,#a9a9a9 100%)"></div><div class="t" style="left:2px;width:25px;text-align:center;top:308.00px;font-size:13px;color:#262626">5</div><div class="a" style="left:27px;top:343px;width:978px;height:1px;background:#d4d4d4"></div><div class="a" style="left:1px;top:343px;width:25px;height:1px;background:linear-gradient(to right,#d4d4d4 0,#d0d0d0 40%,#a9a9a9 55%,#a9a9a9 100%)"></div><div class="t" style="left:2px;width:25px;text-align:center;top:328.00px;font-size:13px;color:#262626">6</div><div class="a" style="left:27px;top:363px;width:978px;height:1px;background:#d4d4d4"></div><div class="a" style="left:1px;top:363px;width:25px;height:1px;background:linear-gradient(to right,#d4d4d4 0,#d0d0d0 40%,#a9a9a9 55%,#a9a9a9 100%)"></div><div class="t" style="left:2px;width:25px;text-align:center;top:348.00px;font-size:13px;color:#262626">7</div><div class="a" style="left:27px;top:383px;width:978px;height:1px;background:#d4d4d4"></div><div class="a" style="left:1px;top:383px;width:25px;height:1px;background:linear-gradient(to right,#d4d4d4 0,#d0d0d0 40%,#a9a9a9 55%,#a9a9a9 100%)"></div><div class="t" style="left:2px;width:25px;text-align:center;top:368.00px;font-size:13px;color:#262626">8</div><div class="a" style="left:27px;top:403px;width:978px;height:1px;background:#d4d4d4"></div><div class="a" style="left:1px;top:403px;width:25px;height:1px;background:linear-gradient(to right,#d4d4d4 0,#d0d0d0 40%,#a9a9a9 55%,#a9a9a9 100%)"></div><div class="t" style="left:2px;width:25px;text-align:center;top:388.00px;font-size:13px;color:#262626">9</div><div class="a" style="left:27px;top:423px;width:978px;height:1px;background:#d4d4d4"></div><div class="a" style="left:1px;top:423px;width:25px;height:1px;background:linear-gradient(to right,#d4d4d4 0,#d0d0d0 40%,#a9a9a9 55%,#a9a9a9 100%)"></div><div class="t" style="left:2px;width:25px;text-align:center;top:408.00px;font-size:13px;color:#262626">10</div><div class="a" style="left:27px;top:443px;width:978px;height:1px;background:#d4d4d4"></div><div class="a" style="left:1px;top:443px;width:25px;height:1px;background:linear-gradient(to right,#d4d4d4 0,#d0d0d0 40%,#a9a9a9 55%,#a9a9a9 100%)"></div><div class="t" style="left:2px;width:25px;text-align:center;top:428.00px;font-size:13px;color:#262626">11</div><div class="a" style="left:27px;top:463px;width:978px;height:1px;background:#d4d4d4"></div><div class="a" style="left:1px;top:463px;width:25px;height:1px;background:linear-gradient(to right,#d4d4d4 0,#d0d0d0 40%,#a9a9a9 55%,#a9a9a9 100%)"></div><div class="t" style="left:2px;width:25px;text-align:center;top:448.00px;font-size:13px;color:#262626">12</div><div class="a" style="left:27px;top:483px;width:978px;height:1px;background:#d4d4d4"></div><div class="a" style="left:1px;top:483px;width:25px;height:1px;background:linear-gradient(to right,#d4d4d4 0,#d0d0d0 40%,#a9a9a9 55%,#a9a9a9 100%)"></div><div class="t" style="left:2px;width:25px;text-align:center;top:468.00px;font-size:13px;color:#262626">13</div><div class="a" style="left:27px;top:503px;width:978px;height:1px;background:#d4d4d4"></div><div class="a" style="left:1px;top:503px;width:25px;height:1px;background:linear-gradient(to right,#d4d4d4 0,#d0d0d0 40%,#a9a9a9 55%,#a9a9a9 100%)"></div><div class="t" style="left:2px;width:25px;text-align:center;top:488.00px;font-size:13px;color:#262626">14</div><div class="a" style="left:27px;top:523px;width:978px;height:1px;background:#d4d4d4"></div><div class="a" style="left:1px;top:523px;width:25px;height:1px;background:linear-gradient(to right,#d4d4d4 0,#d0d0d0 40%,#a9a9a9 55%,#a9a9a9 100%)"></div><div class="t" style="left:2px;width:25px;text-align:center;top:508.00px;font-size:13px;color:#262626">15</div><div class="a" style="left:27px;top:543px;width:978px;height:1px;background:#d4d4d4"></div><div class="a" style="left:1px;top:543px;width:25px;height:1px;background:linear-gradient(to right,#d4d4d4 0,#d0d0d0 40%,#a9a9a9 55%,#a9a9a9 100%)"></div><div class="t" style="left:2px;width:25px;text-align:center;top:528.00px;font-size:13px;color:#262626">16</div><div class="a" style="left:27px;top:563px;width:978px;height:1px;background:#d4d4d4"></div><div class="a" style="left:1px;top:563px;width:25px;height:1px;background:linear-gradient(to right,#d4d4d4 0,#d0d0d0 40%,#a9a9a9 55%,#a9a9a9 100%)"></div><div class="t" style="left:2px;width:25px;text-align:center;top:548.00px;font-size:13px;color:#262626">17</div><div class="a" style="left:27px;top:583px;width:978px;height:1px;background:#d4d4d4"></div><div class="a" style="left:1px;top:583px;width:25px;height:1px;background:linear-gradient(to right,#d4d4d4 0,#d0d0d0 40%,#a9a9a9 55%,#a9a9a9 100%)"></div><div class="t" style="left:2px;width:25px;text-align:center;top:568.00px;font-size:13px;color:#262626">18</div><div class="a" style="left:27px;top:603px;width:978px;height:1px;background:#d4d4d4"></div><div class="a" style="left:1px;top:603px;width:25px;height:1px;background:linear-gradient(to right,#d4d4d4 0,#d0d0d0 40%,#a9a9a9 55%,#a9a9a9 100%)"></div><div class="t" style="left:2px;width:25px;text-align:center;top:588.00px;font-size:13px;color:#262626">19</div><div class="a" style="left:27px;top:623px;width:978px;height:1px;background:#d4d4d4"></div><div class="a" style="left:1px;top:623px;width:25px;height:1px;background:linear-gradient(to right,#d4d4d4 0,#d0d0d0 40%,#a9a9a9 55%,#a9a9a9 100%)"></div><div class="t" style="left:2px;width:25px;text-align:center;top:608.00px;font-size:13px;color:#262626">20</div><div class="a" style="left:27px;top:643px;width:978px;height:1px;background:#d4d4d4"></div><div class="a" style="left:1px;top:643px;width:25px;height:1px;background:linear-gradient(to right,#d4d4d4 0,#d0d0d0 40%,#a9a9a9 55%,#a9a9a9 100%)"></div><div class="t" style="left:2px;width:25px;text-align:center;top:628.00px;font-size:13px;color:#262626">21</div><div class="a" style="left:27px;top:663px;width:978px;height:1px;background:#d4d4d4"></div><div class="a" style="left:1px;top:663px;width:25px;height:1px;background:linear-gradient(to right,#d4d4d4 0,#d0d0d0 40%,#a9a9a9 55%,#a9a9a9 100%)"></div><div class="t" style="left:2px;width:25px;text-align:center;top:648.00px;font-size:13px;color:#262626">22</div><div class="a" style="left:1005px;top:223px;width:1px;height:444px;background:#9b9b9b"></div><div class="a" style="left:25px;top:284px;width:2px;height:19px;background:#02723f"></div><div class="a" style="left:1px;top:666px;width:1005px;height:1px;background:#9b9b9b"></div><div class="t" style="left:92.5px;top:289.33px;font-size:12.6px;color:#000;font-weight:400;">=365-264</div><div class="a" style="left:147px;top:285px;width:1px;height:18px;background:#a0a0a0"></div><div class="a" style="left:89px;top:282px;width:67px;height:23px;border:2px solid #02723f"></div><div class="a" style="left:151px;top:300px;width:6px;height:6px;background:#02723f;border:1px solid #fff"></div><div class="a" style="left:1006px;top:204px;width:21px;height:463px;background:#e6e6e6"></div><div class="a" style="left:1009px;top:206px;width:15px;height:15px;background:#fff;border:1px solid #c6c6c6"></div><svg style="left:1013px;top:211px;" width="7" height="4" viewBox="0 0 7 4"><path d="M0 4H7L3.5 0Z" fill="#5f7566"/></svg><div class="a" style="left:1009px;top:221px;width:15px;height:411px;background:#fff;border:1px solid #c6c6c6"></div><div class="a" style="left:1009px;top:632px;width:15px;height:20px;background:#dadada"></div><div class="a" style="left:1009px;top:652px;width:15px;height:15px;background:#fff;border:1px solid #c6c6c6"></div><svg style="left:1013px;top:657px;" width="7" height="4" viewBox="0 0 7 4"><path d="M0 0H7L3.5 4Z" fill="#5f7566"/></svg><div class="a" style="left:1px;top:667px;width:1026px;height:27px;background:#e6e6e6"></div><svg style="left:28px;top:677px;" width="5" height="7" viewBox="0 0 5 7"><path d="M5 0V7L0 3.5Z" fill="#c6c6c6"/></svg><svg style="left:57px;top:677px;" width="5" height="7" viewBox="0 0 5 7"><path d="M0 0V7L5 3.5Z" fill="#c6c6c6"/></svg><div class="a" style="left:101px;top:666px;width:107px;height:25px;background:#fff;border-left:1px solid #9b9b9b;border-right:1px solid #9b9b9b"></div><div class="a" style="left:101px;top:689px;width:107px;height:2px;background:#02723f"></div><div class="t" style="left:113px;top:673.00px;font-size:13px;color:#02723f;font-weight:700;">microexcel.ru</div><svg style="left:241px;top:672px;" width="17" height="17" viewBox="0 0 17 17"><circle cx="8.3" cy="8.3" r="7.6" fill="none" stroke="#7a8a80" stroke-width="1.1"/><path d="M8.3 4V12.6M4 8.3H12.6" stroke="#5f7566" stroke-width="1.8"/></svg><div class="a" style="left:616px;top:675px;width:2px;height:2px;background:#9a9a9a"></div><div class="a" style="left:616px;top:680px;width:2px;height:2px;background:#9a9a9a"></div><div class="a" style="left:616px;top:684px;width:2px;height:2px;background:#9a9a9a"></div><div class="a" style="left:633px;top:673px;width:15px;height:15px;background:#fff;border:1px solid #c6c6c6"></div><svg style="left:637px;top:677px;" width="5" height="7" viewBox="0 0 5 7"><path d="M5 0V7L0 3.5Z" fill="#5f7566"/></svg><div class="a" style="left:648px;top:673px;width:320px;height:15px;background:#fff;border:1px solid #c6c6c6"></div><div class="a" style="left:968px;top:673px;width:24px;height:15px;background:#dadada"></div><div class="a" style="left:991px;top:673px;width:15px;height:15px;background:#fff;border:1px solid #c6c6c6"></div><svg style="left:997px;top:677px;" width="5" height="7" viewBox="0 0 5 7"><path d="M0 0V7L5 3.5Z" fill="#5f7566"/></svg><div class="a" style="left:1px;top:694px;width:1026px;height:1px;background:#c6c6c6"></div><div class="a" style="left:1px;top:695px;width:1026px;height:21px;background:#f3f3f3"></div><div class="t" style="left:9.5px;top:699.69px;font-size:11px;color:#444;font-weight:400;">Ввод</div><svg style="left:73px;top:698px;" width="14" height="13" viewBox="0 0 14 13"><circle cx="2.5" cy="2.5" r="2.3" fill="#5e5e5e"/><rect x="5.5" y="1" width="7.5" height="2" fill="#5e5e5e"/><path d="M12.5 2V12.5H1V5.5" fill="none" stroke="#5e5e5e" stroke-width="1.2"/><rect x="1.5" y="4.5" width="11" height="8" fill="#5e5e5e"/><rect x="2.5" y="5.6" width="2" height="1.4" fill="#f3f3f3"/><rect x="2.5" y="7.9" width="2" height="1.4" fill="#f3f3f3"/><rect x="2.5" y="10.2" width="2" height="1.4" fill="#f3f3f3"/><rect x="5.5" y="5.6" width="2" height="1.4" fill="#f3f3f3"/><rect x="5.5" y="7.9" width="2" height="1.4" fill="#f3f3f3"/><rect x="5.5" y="10.2" width="2" height="1.4" fill="#f3f3f3"/><rect x="8.5" y="5.6" width="2" height="1.4" fill="#f3f3f3"/><rect x="8.5" y="7.9" width="2" height="1.4" fill="#f3f3f3"/><rect x="8.5" y="10.2" width="2" height="1.4" fill="#f3f3f3"/></svg><svg style="left:739px;top:698px;" width="14" height="13" viewBox="0 0 14 13"><rect x="0.5" y="0.5" width="12" height="12" fill="none" stroke="#5f7566"/><path d="M0.5 4.5H12.5M0.5 8.5H12.5M4.5 0.5V12.5M8.5 0.5V12.5" stroke="#5f7566"/></svg><svg style="left:777px;top:698px;" width="14" height="13" viewBox="0 0 14 13"><rect x="0.5" y="0.5" width="13" height="12" fill="none" stroke="#5f7566"/><rect x="3.5" y="2.5" width="7" height="8" fill="none" stroke="#5f7566"/><path d="M5 4.5H9M5 6.5H9M5 8.5H9" stroke="#5f7566"/></svg><svg style="left:815px;top:698px;" width="14" height="13" viewBox="0 0 14 13"><rect x="0.5" y="0.5" width="13" height="12" fill="none" stroke="#5f7566"/><path d="M8.5 0.5V8.5H0.5M4.5 0.5V8.5" fill="none" stroke="#5f7566"/></svg><div class="a" style="left:846px;top:703px;width:6px;height:2px;background:#505050"></div><div class="a" style="left:856px;top:704px;width:100px;height:1px;background:#a0a0a0"></div><div class="a" style="left:905px;top:701px;width:1px;height:6px;background:#a0a0a0"></div><svg style="left:960px;top:700px;" width="8" height="8" viewBox="0 0 8 8"><path d="M4 0V8M0 4H8" stroke="#505050" stroke-width="1.8"/></svg><div class="t" style="left:978.5px;top:699.69px;font-size:11px;color:#a6a6a6;font-weight:400;">100 %</div><div class="a" style="left:0px;top:65px;width:1px;height:652px;background:#02723f"></div><div class="a" style="left:1027px;top:65px;width:1px;height:652px;background:#02723f"></div><div class="a" style="left:0px;top:716px;width:1028px;height:1px;background:#02723f"></div><div class="a" style="left:245px;top:164px;width:82px;height:36px;border:3px solid #f40000;border-radius:11px"></div><div class="a" style="left:81px;top:278px;width:80px;height:34px;border:3px solid #f40000;border-radius:16px"></div></body></html>
